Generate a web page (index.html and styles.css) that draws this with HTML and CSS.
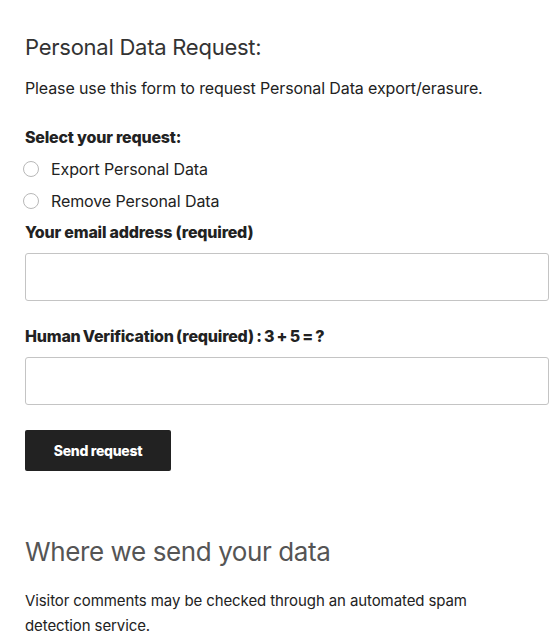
FILE: index.html
```html
<!DOCTYPE html>
<html>
<head>
<meta charset="utf-8">
<link rel="stylesheet" href="styles.css">
</head>
<body>
<main class="page">
  <h1 class="title">Personal Data Request:</h1>
  <p class="intro">Please use this form to request Personal Data export/erasure.</p>
  <form class="form">
    <div class="label label-select">Select your request:</div>
    <label class="radio-row"><span class="radio"></span><span>Export Personal Data</span></label>
    <label class="radio-row"><span class="radio"></span><span>Remove Personal Data</span></label>
    <div class="label label-email">Your email address (required)</div>
    <div class="field"></div>
    <div class="label label-human">Human Verification (required) : 3 + 5 = ?</div>
    <div class="field"></div>
    <div class="btn">Send request</div>
  </form>
  <h2 class="subtitle">Where we send your data</h2>
  <p class="body">Visitor comments may be checked through an automated spam detection service.</p>
</main>
</body>
</html>
```
FILE: styles.css
```css
html, body { margin: 0; padding: 0; background: #fff; }
body { font-family: "Inter", "Liberation Sans", sans-serif; color: #222; }
.page { width: 524px; padding: 32px 0 0 25px; }
.title { margin: 0; font-size: 22px; line-height: 30px; font-weight: 400; color: #333; letter-spacing: -0.25px; }
.intro { margin: 14px 0 0; font-size: 16px; line-height: 24px; letter-spacing: -0.12px; }
.form { display: flex; flex-direction: column; align-items: flex-start; }
.label { font-size: 16px; line-height: 24px; font-weight: 800; color: #222; letter-spacing: -0.2px; }
.label-select { margin-top: 25px; margin-bottom: 4px; }
.radio-row { display: flex; align-items: center; gap: 12px; height: 32px; font-size: 16px; letter-spacing: -0.1px; }
.radio { width: 16px; height: 16px; border: 1px solid #b8b8b8; border-radius: 50%; box-sizing: border-box; margin-left: -2px; }
.label-email { margin-top: 3px; }
.field { width: 524px; height: 48px; box-sizing: border-box; border: 1px solid #c4c4c4; border-radius: 3px; margin-top: 9px; }
.label-human { margin-top: 23px; word-spacing: -1px; }
.btn { margin-top: 25px; width: 146px; height: 41px; background: #222; color: #fff; border-radius: 2px; font-size: 14px; font-weight: 800; display: flex; align-items: center; justify-content: center; letter-spacing: -0.3px; }
.subtitle { margin: 63px 0 0; font-size: 26px; line-height: 36px; font-weight: 400; color: #555; letter-spacing: -0.4px; }
.body { margin: 18px 0 0; font-size: 15px; line-height: 25px; letter-spacing: -0.1px; padding-right: 40px; }
```
